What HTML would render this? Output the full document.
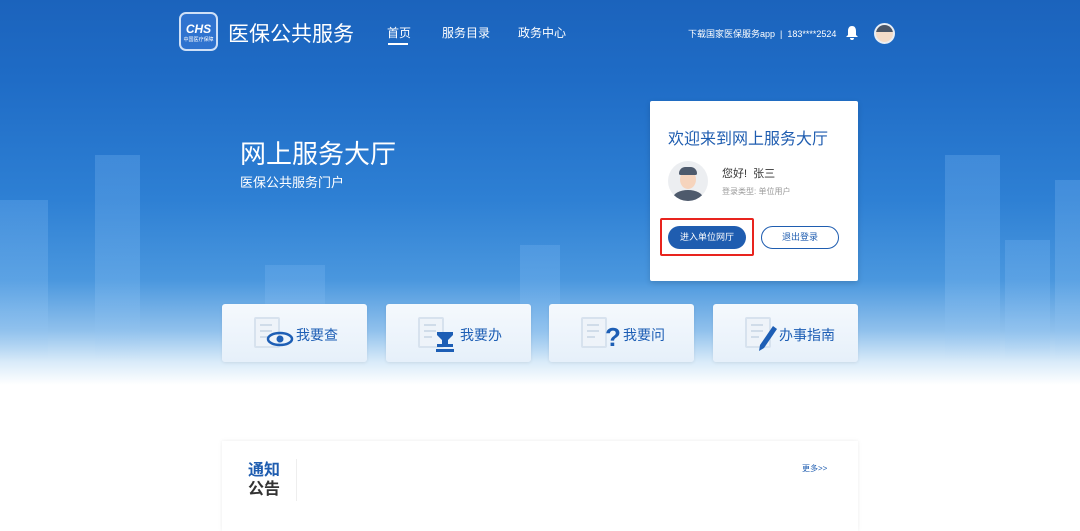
<!DOCTYPE html><html><head><meta charset="utf-8"><style>
*{margin:0;padding:0;box-sizing:border-box}
body{width:1080px;height:520px;overflow:hidden;font-family:"Liberation Sans","Noto Sans CJK SC",sans-serif;background:#fff;position:relative}
.bg{position:absolute;left:0;top:0;width:1080px;height:400px;background:linear-gradient(180deg,#1b63bc 0px,#1f6cc6 80px,#2e80d4 200px,#4a97de 280px,#8fc0ec 330px,#d9ebf9 362px,#fff 385px)}
.city{position:absolute;background:linear-gradient(180deg,rgba(120,180,240,.3),rgba(150,200,245,.25) 70%,rgba(255,255,255,0))}
.t{position:absolute;color:#fff;white-space:nowrap}
.card{position:absolute;top:304px;width:145px;height:58px;background:linear-gradient(180deg,#f5f9fd,#e6f0fa);border-radius:3px;box-shadow:0 1px 3px rgba(0,0,0,.08)}
.card .doc{position:absolute;left:32px;top:13px;width:26px;height:31px;border:2px solid #d7e2ee;background:#eef3f9;border-radius:2px}
.card .doc i{position:absolute;left:4px;height:2px;background:#d0dce9;width:12px}
.card span{position:absolute;left:74px;top:21px;font-size:14px;color:#1d5eb5}
</style></head><body>
<div class="bg"></div>
<div class="city" style="left:0;width:48px;top:200px;height:160px"></div>
<div class="city" style="left:95px;width:45px;top:155px;height:205px"></div>
<div class="city" style="left:265px;width:60px;top:265px;height:95px"></div>
<div class="city" style="left:520px;width:40px;top:245px;height:115px"></div>
<div class="city" style="left:945px;width:55px;top:155px;height:205px"></div>
<div class="city" style="left:1005px;width:45px;top:240px;height:120px"></div>
<div class="city" style="left:1055px;width:25px;top:180px;height:180px"></div>
<div style="position:absolute;left:179px;top:12px;width:39px;height:39px;border-radius:7px;background:#2f73cf;border:2px solid #cfe0f7"><div style="color:#fff;font-weight:bold;font-style:italic;font-size:12px;text-align:center;margin-top:8px">CHS</div><div style="color:#fff;font-size:5px;text-align:center">中国医疗保障</div></div>
<div class="t" style="left:228px;top:18px;font-size:21px">医保公共服务</div>
<div class="t" style="left:387px;top:24px;font-size:12px">首页</div>
<div style="position:absolute;left:388px;top:43px;width:20px;height:2px;background:#fff"></div>
<div class="t" style="left:442px;top:24px;font-size:12px">服务目录</div>
<div class="t" style="left:518px;top:24px;font-size:12px">政务中心</div>
<div class="t" style="left:688px;top:27px;font-size:9px">下载国家医保服务app &nbsp;| &nbsp;183****2524</div>
<svg style="position:absolute;left:845px;top:25px" width="14" height="16" viewBox="0 0 14 16"><path d="M7 1C4 1 3 3.5 3 6v4l-2 2h12l-2-2V6c0-2.5-1-5-4-5z M5 13a2 2 0 0 0 4 0z" fill="#fff"/></svg>
<div style="position:absolute;left:874px;top:23px;width:21px;height:21px;border-radius:50%;background:#f4dcc8;border:2px solid #e8eef5;overflow:hidden"><div style="height:7px;background:#4a5566"></div></div>
<div class="t" style="left:240px;top:134px;font-size:26px">网上服务大厅</div>
<div class="t" style="left:240px;top:172px;font-size:13px">医保公共服务门户</div>
<div style="position:absolute;left:650px;top:101px;width:208px;height:180px;background:#fff;border-radius:2px;box-shadow:0 2px 6px rgba(0,0,0,.15)">
<div style="position:absolute;left:18px;top:24px;font-size:16px;color:#1f5db0;white-space:nowrap">欢迎来到网上服务大厅</div>
<div style="position:absolute;left:18px;top:60px;width:40px;height:40px;border-radius:50%;background:#eceef1;overflow:hidden"><div style="position:absolute;left:12px;top:9px;width:16px;height:19px;border-radius:50%;background:#f6d4bd"></div><div style="position:absolute;left:11px;top:6px;width:18px;height:8px;border-radius:8px 8px 2px 2px;background:#4e5a6c"></div><div style="position:absolute;left:5px;top:29px;width:30px;height:16px;border-radius:50% 50% 0 0;background:#4e5a6c"></div></div>
<div style="position:absolute;left:72px;top:64px;font-size:11px;color:#333;white-space:nowrap">您好! &nbsp;张三</div>
<div style="position:absolute;left:72px;top:85px;font-size:8px;color:#999;white-space:nowrap">登录类型: 单位用户</div>
<div style="position:absolute;left:10px;top:117px;width:94px;height:38px;border:2px solid #e8241e;border-radius:2px"></div>
<div style="position:absolute;left:18px;top:125px;width:78px;height:23px;border-radius:12px;background:#1f5db0;color:#fff;font-size:9px;text-align:center;line-height:23px">进入单位网厅</div>
<div style="position:absolute;left:111px;top:125px;width:78px;height:23px;border-radius:12px;border:1px solid #1f5db0;color:#1f5db0;font-size:9px;text-align:center;line-height:21px">退出登录</div>
</div>
<div class="card" style="left:222px"><div class="doc"><i style="top:5px"></i><i style="top:11px"></i><i style="top:17px;width:8px"></i></div><svg style="position:absolute;left:44px;top:27px" width="28" height="16"><ellipse cx="14" cy="8" rx="12" ry="6" fill="none" stroke="#1d5eb5" stroke-width="2.5"/><circle cx="14" cy="8" r="3.5" fill="#1d5eb5"/></svg><span>我要查</span></div>
<div class="card" style="left:386px"><div class="doc"><i style="top:5px"></i><i style="top:11px"></i><i style="top:17px;width:8px"></i></div><svg style="position:absolute;left:48px;top:26px" width="22" height="22"><path d="M3 2h16v3l-5 5v4h5v3H3v-3h5v-4L3 5z" fill="#1d5eb5"/><rect x="2" y="19" width="18" height="3" fill="#1d5eb5"/></svg><span>我要办</span></div>
<div class="card" style="left:549px"><div class="doc"><i style="top:5px"></i><i style="top:11px"></i><i style="top:17px;width:8px"></i></div><div style="position:absolute;left:56px;top:18px;font-size:26px;font-weight:bold;color:#1d5eb5">?</div><span>我要问</span></div>
<div class="card" style="left:713px"><div class="doc"><i style="top:5px"></i><i style="top:11px"></i><i style="top:17px;width:8px"></i></div><svg style="position:absolute;left:43px;top:20px" width="22" height="28"><path d="M17 2l4 3L8 24l-5 3 1-6z" fill="#1d5eb5"/></svg><span style="left:66px">办事指南</span></div>
<div style="position:absolute;left:222px;top:441px;width:636px;height:90px;background:#fff;box-shadow:0 0 4px rgba(0,0,0,.08)">
<div style="position:absolute;left:26px;top:20px;font-size:16px;font-weight:bold;color:#1f5db0;line-height:19px">通知<br><span style="color:#333">公告</span></div>
<div style="position:absolute;left:74px;top:18px;width:1px;height:42px;background:#eee"></div>
<div style="position:absolute;left:580px;top:22px;font-size:8px;color:#1f5db0">更多&gt;&gt;</div>
</div>
</body></html>
